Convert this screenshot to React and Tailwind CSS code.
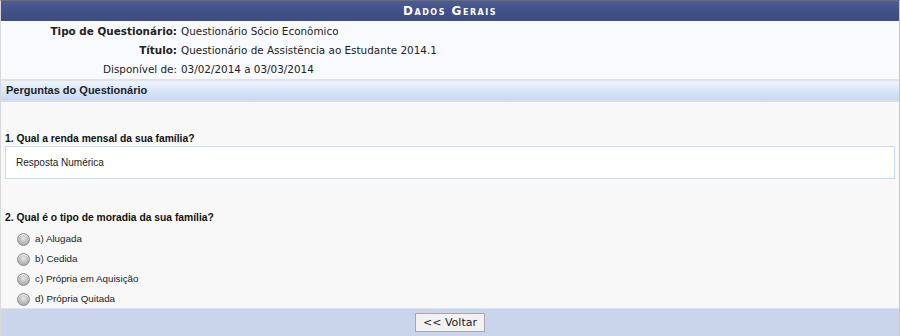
const Radio = ({ label }) => (
    <div className="flex items-center h-[20px] pl-[12px]">
        <span className="w-[13px] h-[13px] shrink-0 rounded-full border border-[#8e8e8e] bg-[radial-gradient(circle_at_50%_40%,#e8e8e8_0%,#bdbdbd_50%,#9c9c9c_100%)] shadow-[inset_0_1px_1px_rgba(255,255,255,0.8)]" />
        <span className="ml-[5px] text-[9.8px] text-[#222]">{label}</span>
    </div>
);

const InfoRow = ({ label, value, bold = true }) => (
    <div className="flex items-center h-[19px]">
        <span className={`w-[180px] text-right pr-[4px] text-[#222] ${bold ? 'font-bold' : ''}`}>{label}</span>
        <span className="text-[#222]">{value}</span>
    </div>
);

const App = () => {
    return (
        <div className="w-[900px] h-[336px] bg-[#f8f8f8] border-t border-[#6e6e6e] border-r border-r-[#c8c8c8] border-l border-l-[#d8d8d8] overflow-hidden flex flex-col" style={{ fontFamily: '"DejaVu Sans", Verdana, sans-serif' }}>
            {/* Cabeçalho */}
            <div className="h-[20px] shrink-0 bg-gradient-to-b from-[#4d5c96] via-[#415087] to-[#3e4c80] flex items-center justify-center">
                <span className="text-white font-bold text-[12px] tracking-[1.5px] [font-variant:small-caps]">Dados Gerais</span>
            </div>

            {/* Dados */}
            <div className="shrink-0 bg-[#f9fafd] pt-[1px] text-[10.4px]">
                <InfoRow label="Tipo de Questionário:" value="Questionário Sócio Econômico" />
                <InfoRow label="Título:" value="Questionário de Assistência ao Estudante 2014.1" />
                <InfoRow label="Disponível de:" value="03/02/2014 a 03/03/2014" bold={false} />
            </div>

            {/* Subcabeçalho */}
            <div className="shrink-0 h-[23px] border-t-2 border-[#e2e2e2] border-b-2 border-b-[#dcdcdc] bg-gradient-to-b from-[#eef4fe] to-[#c4d9f6] flex items-center pl-[5px]" style={{ fontFamily: '"Liberation Sans", Arial, sans-serif' }}>
                <span className="font-bold text-[11px] text-[#222]">Perguntas do Questionário</span>
            </div>

            {/* Perguntas */}
            <div className="flex-1 min-h-0 overflow-hidden bg-[#f8f8f8] px-[4px]" style={{ fontFamily: '"Liberation Sans", Arial, sans-serif' }}>
                <div className="pt-[30px] leading-[14px] text-[10.3px] font-bold text-[#111]">1. Qual a renda mensal da sua família?</div>
                <div className="h-[33px] bg-white border border-[#c9daf3] flex items-center pl-[10px] text-[10px] text-[#222]">
                    Resposta Numérica
                </div>
                <div className="mt-[32px] leading-[14px] text-[10.3px] font-bold text-[#111]">2. Qual é o tipo de moradia da sua família?</div>
                <div className="mt-[4px]">
                    <Radio label="a) Alugada" />
                    <Radio label="b) Cedida" />
                    <Radio label="c) Própria em Aquisição" />
                    <Radio label="d) Própria Quitada" />
                </div>
            </div>

            {/* Rodapé */}
            <div className="shrink-0 h-[28px] bg-[#cad5ec] border-t border-[#dfe5f0] flex items-center justify-center">
                <button className="h-[19px] px-[7px] bg-[#f2f2f2] border border-[#a8a8a8] text-[11px] leading-none text-[#222]">
                    &lt;&lt; Voltar
                </button>
            </div>
        </div>
    );
};

export default App;
